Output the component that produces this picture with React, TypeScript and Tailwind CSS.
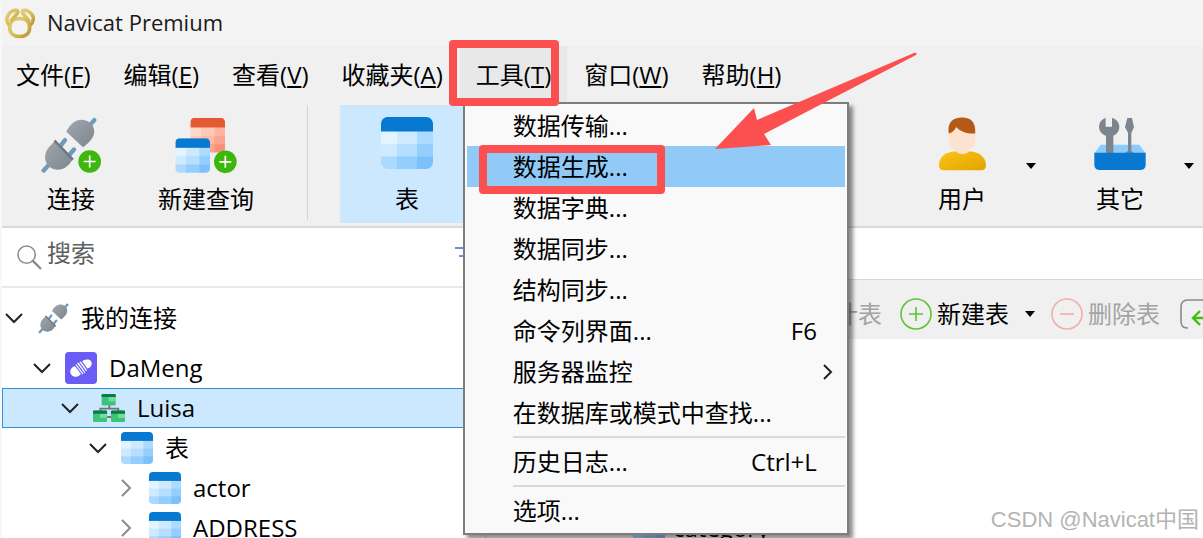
import React, { useState } from 'react';

const FONT = "font-['Open_Sans','Noto_Sans_CJK_SC',sans-serif]";

interface IconProps {
  className?: string;
}

const LogoIcon: React.FC<IconProps> = ({ className }) => (
  <svg viewBox="0 0 90 92" className={className} fill="none" stroke="url(#oro)" strokeWidth="11">
    <defs>
      <linearGradient id="oro" x1="0" y1="0" x2="1" y2="1">
        <stop offset="0" stopColor="#d9cf84" />
        <stop offset="0.5" stopColor="#dcc056" />
        <stop offset="1" stopColor="#b99338" />
      </linearGradient>
    </defs>
    <path d="M44 31C62 31 74 41 74 58C74 76 61 85 44 85C27 85 14 76 14 58C14 41 26 31 44 31Z" />
    <path d="M12 50C4 42 4 29 10 20C16 10 27 5 36 7C40 10 38 16 33 20L16 40" />
    <path d="M76 50C85 42 87 30 82 21C76 11 64 5 54 7C50 10 52 16 57 20L73 40" />
  </svg>
);

const PlugShape: React.FC = () => (
  <>
    <g stroke="#6b9cc0" strokeWidth="13" strokeLinecap="round">
      <path d="M160 9L142 29" />
      <path d="M8 160L28 138" />
      <path d="M72 69L58 87" />
      <path d="M99 97L86 112" />
    </g>
    <path d="M76 44C90 12 120 -2 146 16C170 36 162 65 126 90Z" fill="url(#gris)" />
    <path d="M43 68L98 125L91 132C76 157 47 166 24 148C5 130 9 100 34 80Z" fill="url(#gris)" />
    <path d="M43 68L98 125L93 130L38 73Z" fill="#6f7780" />
  </>
);

const PlusBadge: React.FC<{ cx: number; cy: number }> = ({ cx, cy }) => (
  <g transform={`translate(${cx} ${cy})`}>
    <circle r="34" fill="#3db70d" />
    <path d="M-18 0H18M0 -18V18" stroke="#fff" strokeWidth="5" />
  </g>
);

const ConnectionIcon: React.FC<IconProps> = ({ className }) => (
  <svg viewBox="0 0 183 170" className={className} fill="none">
    <defs>
      <linearGradient id="gris" x1="0" y1="0" x2="1" y2="1">
        <stop offset="0" stopColor="#a0a7ae" />
        <stop offset="1" stopColor="#7d858d" />
      </linearGradient>
    </defs>
    <PlugShape />
    <PlusBadge cx={146} cy={133} />
  </svg>
);

const PlugIcon: React.FC<IconProps> = ({ className }) => (
  <svg viewBox="0 0 168 170" className={className} fill="none">
    <PlugShape />
  </svg>
);

const azules = ['#e2f4ff', '#cdeaff', '#abdbff', '#cdeaff', '#b6deff', '#94ceff', '#abd9ff', '#94ceff', '#7dc1fa'];
const rojos = ['#ffd8cc', '#ffc9b9', '#ffb5a0', '#ffc9b9', '#ffb8a4', '#fca48c', '#fbb09b', '#f9a58f', '#f49378'];

const Grid: React.FC<{ x: number; y: number; id: string; head: string; cells: string[] }> = ({ x, y, id, head, cells }) => (
  <g transform={`translate(${x} ${y})`}>
    <clipPath id={id}>
      <rect width="104" height="104" rx="13" />
    </clipPath>
    <g clipPath={`url(#${id})`}>
      {cells.map((color, i) => (
        <rect
          key={i}
          x={[0, 32, 72][i % 3]}
          y={[26, 54, 79][Math.floor(i / 3)]}
          width="41"
          height="30"
          fill={color}
        />
      ))}
      <rect width="104" height="29" fill={head} />
    </g>
  </g>
);

const TableIcon: React.FC<IconProps> = ({ className }) => (
  <svg viewBox="0 0 104 104" className={className}>
    <Grid x={0} y={0} id="tabla" head="#0879d1" cells={azules} />
  </svg>
);

const QueryIcon: React.FC<IconProps> = ({ className }) => (
  <svg viewBox="0 0 186 170" className={className}>
    <Grid x={46} y={2} id="roja" head="#e35a35" cells={rojos} />
    <Grid x={1} y={63} id="azul" head="#0879d1" cells={azules} />
    <PlusBadge cx={151} cy={134} />
  </svg>
);

const UserIcon: React.FC<IconProps> = ({ className }) => (
  <svg viewBox="0 0 140 160" className={className}>
    <defs>
      <linearGradient id="camisa" x1="0" y1="0" x2="1" y2="1">
        <stop offset="0" stopColor="#fcc419" />
        <stop offset="1" stopColor="#e3a300" />
      </linearGradient>
    </defs>
    <path d="M43 102C12 106 0 124 0 143C0 152 5 158 14 158H126C135 158 140 152 140 143C140 124 126 106 97 102Z" fill="url(#camisa)" />
    <path d="M29 48C26 76 36 94 50 99C55 113 85 113 90 99C104 94 112 76 108 48L60 20Z" fill="#fde3cf" />
    <path d="M29 49C24 15 42 1 68 1C96 1 110 15 108 49C84 50 64 43 51 29C47 40 39 46 29 49Z" fill="#b35a16" />
  </svg>
);

const ToolsIcon: React.FC<IconProps> = ({ className }) => (
  <svg viewBox="0 0 156 160" className={className}>
    <path d="M20 82H136L155 108H1Z" fill="#8ccbfa" />
    <path d="M35 2V28H54V2C68 5 76 16 76 29C76 42 67 52 58 55V110H36V55C25 52 15 42 15 29C15 16 23 5 35 2Z" fill="#7c858d" />
    <path d="M100 2H114L120 30L112 46V100L122 110H91L102 100V46L93 30Z" fill="#7c858d" />
    <path d="M1 106H155V142C155 152 148 158 138 158H18C8 158 1 152 1 142Z" fill="#0b78d0" />
  </svg>
);

const DaMengIcon: React.FC<IconProps> = ({ className }) => (
  <svg viewBox="0 0 96 96" className={className}>
    <rect width="96" height="96" rx="11" fill="#6a5cf5" />
    <g transform="rotate(-24 48 48)">
      <ellipse cx="30" cy="51" rx="17" ry="16" fill="#fff" />
      <ellipse cx="66" cy="44" rx="18" ry="14" fill="#fff" />
      <ellipse cx="48" cy="48" rx="18" ry="19" fill="#fff" />
      <path d="M34 30L43 68M41 28L50 68M49 27L57 67M57 28L64 63" stroke="#6a5cf5" strokeWidth="3.5" />
    </g>
  </svg>
);

const SchemaIcon: React.FC<IconProps> = ({ className }) => (
  <svg viewBox="0 0 100 90" className={className}>
    <path d="M51 34V48M23 55V47H79V55M40 73H62" stroke="#6d757c" strokeWidth="6" fill="none" />
    {[[27, 1], [0, 53], [56, 53]].map(([x, y]) => (
      <g key={x} transform={`translate(${x} ${y})`}>
        <rect width="44" height="36" rx="4" fill="#3cc57a" />
        <rect x="22" y="10" width="22" height="13" fill="#74dda1" />
        <path d="M0 10V4Q0 0 4 0H40Q44 0 44 4V10Z" fill="#0d7a45" />
      </g>
    ))}
  </svg>
);

const Chevron: React.FC<{ open?: boolean }> = ({ open = false }) => (
  <svg viewBox="0 0 18 18" className="w-[18px] h-[18px] shrink-0" fill="none" strokeWidth="2">
    {open ? <path d="M1 5L9 13L17 5" stroke="#222" /> : <path d="M5 1L13 9L5 17" stroke="#888" />}
  </svg>
);

const Caret: React.FC = () => (
  <svg viewBox="0 0 10 6" className="w-2.5 h-1.5 shrink-0">
    <path d="M0 0H10L5 6Z" fill="#000" />
  </svg>
);

const CircleIcon: React.FC<{ color: string; plus?: boolean }> = ({ color, plus = false }) => (
  <svg viewBox="0 0 32 32" className="w-8 h-8 shrink-0" fill="none" stroke={color} strokeWidth="1.6">
    <circle cx="16" cy="16" r="15" />
    <path d={plus ? 'M9 16H23M16 9V23' : 'M9 16H23'} />
  </svg>
);

const menuBar = [
  { label: '文件', tecla: 'F' },
  { label: '编辑', tecla: 'E' },
  { label: '查看', tecla: 'V' },
  { label: '收藏夹', tecla: 'A' },
  { label: '工具', tecla: 'T' },
  { label: '窗口', tecla: 'W' },
  { label: '帮助', tecla: 'H' },
];

interface ToolItem {
  label: string;
  atajo?: string;
  submenu?: boolean;
  separador?: boolean;
  marcado?: boolean;
}

const toolItems: ToolItem[] = [
  { label: '数据传输...' },
  { label: '数据生成...', marcado: true },
  { label: '数据字典...' },
  { label: '数据同步...' },
  { label: '结构同步...' },
  { label: '命令列界面...', atajo: 'F6' },
  { label: '服务器监控', submenu: true },
  { label: '在数据库或模式中查找...' },
  { label: '历史日志...', atajo: 'Ctrl+L', separador: true },
  { label: '选项...', separador: true },
];

const ToolsMenu: React.FC = () => (
  <div
    role="menu"
    className="absolute left-[3px] top-full z-10 w-[386px] -mt-px border-2 border-[#7d7d7d] bg-[#f9f9f9] px-0.5 pt-px pb-0.5 shadow-[4px_4px_4px_rgba(0,0,0,0.45)]"
  >
    {toolItems.map((item) => (
      <React.Fragment key={item.label}>
        {item.separador && <div role="separator" className="my-[3px] ml-[46px] h-0.5 bg-[#d9d9d9]" />}
        <button
          type="button"
          role="menuitem"
          className={`relative flex w-full h-[41px] items-center justify-between pl-[46px] text-left whitespace-nowrap ${
            item.marcado ? 'bg-[#91c9f7]' : ''
          }`}
        >
          {item.label}
          {item.atajo && <span className="mr-7">{item.atajo}</span>}
          {item.submenu && (
            <svg viewBox="0 0 10 16" className="mr-3 w-2.5 h-4" fill="none" stroke="#222" strokeWidth="2">
              <path d="M1 1L8 8L1 15" />
            </svg>
          )}
          {item.marcado && (
            <span className="absolute left-3 -top-px w-[186px] h-[49px] rounded-sm border-8 border-[#fb4f50]" />
          )}
        </button>
      </React.Fragment>
    ))}
  </div>
);

interface ToolButtonProps {
  label: string;
  icon: React.ReactNode;
  className?: string;
}

const ToolButton: React.FC<ToolButtonProps> = ({ label, icon, className = '' }) => (
  <button type="button" className={`flex h-[118px] shrink-0 flex-col items-center pt-3 ${className}`}>
    <span className="flex h-16 items-start justify-center">{icon}</span>
    <span className="leading-9">{label}</span>
  </button>
);

interface TreeRowProps {
  label: string;
  icon: React.ReactNode;
  open?: boolean;
  selected?: boolean;
  className: string;
}

const TreeRow: React.FC<TreeRowProps> = ({ label, icon, open, selected, className }) => (
  <li
    role="treeitem"
    aria-expanded={!!open}
    aria-selected={!!selected}
    className={`flex h-10 items-center border ${
      selected ? 'border-[#3391dc] bg-[#cce8ff]' : 'border-transparent'
    } ${className}`}
  >
    <Chevron open={open} />
    <span className="ml-3.5 mr-3 flex w-8 shrink-0 justify-center">{icon}</span>
    {label}
  </li>
);

const smallTable = <TableIcon className="w-8 h-8" />;

const App: React.FC = () => {
  const [busqueda, setBusqueda] = useState('');

  return (
    <div className={`relative flex h-screen flex-col overflow-hidden border-l-2 border-[#f8f8f8] bg-[#f0f0f0] text-2xl text-black ${FONT}`}>
      <header className="flex h-[46px] shrink-0 items-center gap-3 bg-[#f3f3f3] pl-[3px] text-[22px] text-[#1a1a1a]">
        <LogoIcon className="w-[30px] h-[31px]" />
        <h1>Navicat Premium</h1>
      </header>

      <nav className="-ml-0.5 flex h-[57px] shrink-0 gap-px">
        {menuBar.map(({ label, tecla }) => (
          <div key={label} className="relative">
            <button
              type="button"
              className={`flex h-full items-center px-4 whitespace-nowrap ${tecla === 'T' ? 'bg-[#e8e8e8]' : ''}`}
            >
              <span>
                {label}(<u className="underline-offset-2 decoration-2">{tecla}</u>)
              </span>
            </button>
            {tecla === 'T' && (
              <>
                <ToolsMenu />
                <span className="absolute -left-[11px] -top-1.5 z-20 w-[110px] h-[66px] rounded-sm border-8 border-[#fb4f50]" />
              </>
            )}
          </div>
        ))}
      </nav>

      <div className="flex h-[125px] shrink-0 border-b-2 border-[#d9d9d9] pt-0.5">
        <ToolButton label="连接" className="w-[138px]" icon={<ConnectionIcon className="w-[61px] h-[57px]" />} />
        <ToolButton label="新建查询" className="w-[132px]" icon={<QueryIcon className="w-[62px] h-[57px]" />} />
        <div className="ml-[35px] mr-8 h-[115px] w-px shrink-0 bg-[#d4d4d4]" />
        <ToolButton label="表" className="w-[134px] bg-[#cce8ff]" icon={<TableIcon className="w-[52px] h-[52px]" />} />
        <ToolButton label="用户" className="ml-[436px] w-[104px]" icon={<UserIcon className="w-[47px] h-[54px]" />} />
        <button type="button" aria-label="用户选项" className="flex w-[34px] shrink-0 items-center justify-center">
          <Caret />
        </button>
        <ToolButton label="其它" className="ml-5 w-[104px]" icon={<ToolsIcon className="w-[52px] h-[54px]" />} />
        <button type="button" aria-label="其它选项" className="flex w-[34px] shrink-0 items-center justify-center">
          <Caret />
        </button>
      </div>

      <div className="flex min-h-0 grow bg-white">
        <aside className="w-[484px] shrink-0 overflow-hidden border-r border-[#d9d9d9]">
          <div className="flex h-[60px] items-center border-b-2 border-[#e9e9e9] pl-[15px] pr-2.5">
            <svg viewBox="0 0 26 26" className="mr-[5px] w-[25px] h-[25px] shrink-0" fill="none" stroke="#8a8a8a" strokeWidth="1.6">
              <circle cx="10" cy="10" r="9" />
              <path d="M16 16L25 25" strokeWidth="2.4" />
            </svg>
            <input
              type="search"
              aria-label="搜索"
              placeholder="搜索"
              value={busqueda}
              onChange={(e) => setBusqueda(e.target.value)}
              className="min-w-0 grow pb-2 outline-none placeholder:text-[#5f5f5f]"
            />
            <svg viewBox="0 0 20 18" className="mb-2 w-5 h-[18px] shrink-0" stroke="#2f6fd6" strokeWidth="1.6">
              <path d="M0 4H20M4 12H16" />
            </svg>
          </div>
          <ul role="tree">
            <TreeRow label="我的连接" open className="my-2.5 pl-[2px]" icon={<PlugIcon className="w-[31px] h-[31px]" />} />
            <TreeRow label="DaMeng" open className="pl-[30px]" icon={<DaMengIcon className="w-8 h-8" />} />
            <TreeRow label="Luisa" open selected className="pl-[58px]" icon={<SchemaIcon className="w-8 h-[30px]" />} />
            <TreeRow label="表" open className="pl-[86px]" icon={smallTable} />
            <TreeRow label="actor" className="pl-[114px]" icon={smallTable} />
            <TreeRow label="ADDRESS" className="pl-[114px]" icon={smallTable} />
          </ul>
        </aside>

        <main className="min-w-0 grow overflow-hidden">
          <div className="mt-[51px] flex h-[60px] items-center border-t border-[#d9d9d9] bg-[#f0f0f0] pt-2 pl-[324px] whitespace-nowrap">
            <button type="button" disabled className="text-[#a3a3a3]">
              设计表
            </button>
            <button type="button" className="ml-[18px] flex items-center gap-[5px]">
              <CircleIcon color="#5cc535" plus />
              新建表
            </button>
            <button type="button" aria-label="新建表选项" className="flex w-[42px] shrink-0 items-center justify-center">
              <Caret />
            </button>
            <button type="button" disabled className="flex items-center gap-[5px] text-[#a3a3a3]">
              <CircleIcon color="#f2aeae" />
              删除表
            </button>
            <button type="button" aria-label="导入向导" className="ml-5 shrink-0">
              <svg viewBox="0 0 32 30" className="w-8 h-[30px]" fill="none">
                <path d="M8 29H7Q1 29 1 22V8Q1 1 8 1H24Q31 1 31 8" stroke="#8a8a8a" strokeWidth="1.6" />
                <path d="M20 12L13 19L20 26M13 19H22Q28 19 30 24" stroke="#3fbf12" strokeWidth="2.4" />
              </svg>
            </button>
          </div>
          <ul className="mt-[169px] pl-[147px]">
            <li className="flex h-10 items-center gap-2">
              {smallTable}
              category
            </li>
          </ul>
        </main>
      </div>

      <svg viewBox="0 0 203 97" className="absolute left-[713px] top-[52px] z-30 w-[203px] h-[97px]">
        <path d="M0 97L39 56L42 68L199 1Q203 0 201 3L49 82L56 93Z" fill="#fb4f50" />
      </svg>

      <p className="absolute bottom-1 right-1 z-30 font-['Liberation_Sans','Noto_Sans_CJK_SC',sans-serif] text-[22px] leading-7 text-[#b4b4b4]">
        CSDN @Navicat中国
      </p>
    </div>
  );
};

export default App;
